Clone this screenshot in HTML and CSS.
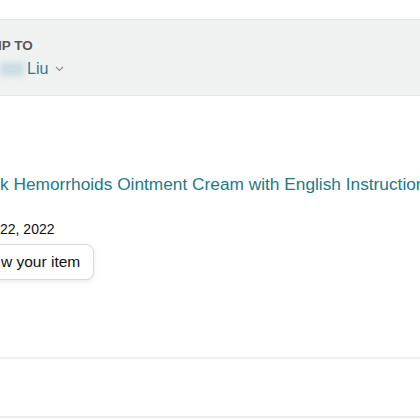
FILE: index.html
```html
<!DOCTYPE html>
<html>
<head>
<meta charset="utf-8">
<link rel="stylesheet" href="styles.css">
</head>
<body>
<div class="page">
  <div class="header">
    <div class="ship-label">IP TO</div>
    <div class="ship-name">
      <span class="blur"></span>
      <span class="name">Liu</span>
      <svg class="chev" width="9" height="6" viewBox="0 0 9 6"><path d="M1 1 L4.5 4.5 L8 1" fill="none" stroke="#8a9090" stroke-width="1.2"/></svg>
    </div>
  </div>
  <div class="body">
    <div class="title">k Hemorrhoids Ointment Cream with English Instructions</div>
    <div class="date">22, 2022</div>
    <div class="btn">w your item</div>
  </div>
  <div class="divider"></div>
  <div class="footer"></div>
</div>
</body>
</html>
```
FILE: styles.css
```css
html, body {
  margin: 0;
  padding: 0;
  background: #ffffff;
  overflow: hidden;
}
.page {
  width: 420px;
  height: 420px;
  font-family: "Liberation Sans", Arial, sans-serif;
  color: #0f1111;
  overflow: hidden;
}
.header {
  margin-top: 19px;
  height: 77px;
  background: #f0f2f2;
  border-top: 1px solid #e3e6e6;
  border-bottom: 1px solid #e3e6e6;
  box-sizing: border-box;
  padding-top: 17px;
}
.ship-label {
  font-size: 13.5px;
  line-height: 18px;
  color: #565959;
  font-weight: bold;
  margin-left: -2px;
}
.ship-name {
  display: flex;
  align-items: center;
  margin-top: 4px;
  height: 20px;
}
.blur {
  width: 24px;
  height: 14px;
  background: #c9dde2;
  filter: blur(3px);
  margin-right: 3px;
}
.name {
  font-size: 16px;
  color: #2a7b86;
}
.chev {
  margin-left: 7px;
}
.body {
  padding-top: 76px;
  height: 261px;
  box-sizing: border-box;
}
.title {
  font-size: 17.3px;
  line-height: 24px;
  color: #227a86;
  white-space: nowrap;
}
.date {
  margin-top: 23px;
  font-size: 14px;
  line-height: 20px;
}
.btn {
  display: inline-flex;
  align-items: center;
  margin-top: 5px;
  margin-left: -12px;
  height: 34px;
  padding: 0 13px 0 12px;
  border: 1px solid #d5d9d9;
  border-radius: 8px;
  box-shadow: 0 2px 5px rgba(213, 217, 217, 0.5);
  font-size: 15.5px;
  background: #fff;
}
.divider {
  height: 2px;
  background: #eef0f0;
}
.footer {
  height: 57px;
  border-bottom: 2px solid #eceeee;
}
```
